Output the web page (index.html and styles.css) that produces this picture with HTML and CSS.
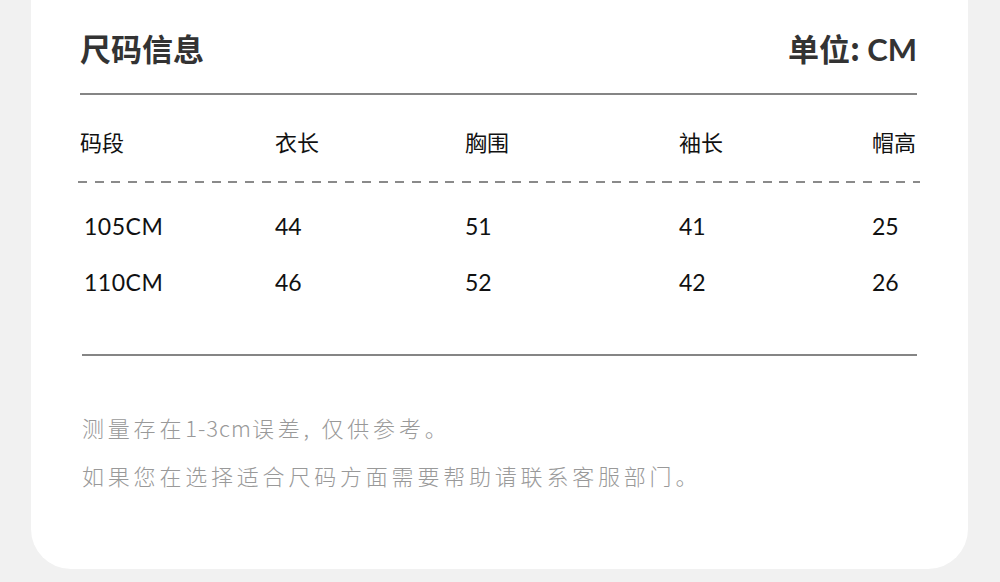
FILE: index.html
```html
<!DOCTYPE html>
<html lang="zh-CN">
<head>
<meta charset="utf-8">
<title>尺码信息</title>
<link rel="stylesheet" href="styles.css">
</head>
<body>
<div class="card">
  <div class="head">
    <h1 class="title">尺码信息</h1>
    <div class="unit">单位: <span class="unit-cm">CM</span></div>
  </div>
  <div class="rule"></div>
  <div class="grid thead">
    <div>码段</div><div>衣长</div><div>胸围</div><div>袖长</div><div>帽高</div>
  </div>
  <div class="dash"></div>
  <div class="grid row">
    <div class="size">105CM</div><div>44</div><div>51</div><div>41</div><div>25</div>
  </div>
  <div class="grid row">
    <div class="size">110CM</div><div>46</div><div>52</div><div>42</div><div>26</div>
  </div>
  <div class="rule rule-bottom"></div>
  <div class="notes">
    <p>测量存在<span class="latin">1-3cm</span>误差, 仅供参考。</p>
    <p>如果您在选择适合尺码方面需要帮助请联系客服部门。</p>
  </div>
</div>
</body>
</html>
```

FILE: styles.css
```css
* { box-sizing: border-box; }
html, body { margin: 0; padding: 0; }
body {
  width: 1000px;
  height: 582px;
  background: #f1f1f1;
  overflow: hidden;
  font-family: "Lato", "Noto Sans CJK SC", sans-serif;
  color: #111;
}
.card {
  margin-left: 31px;
  width: 937px;
  height: 569px;
  background: #fff;
  border-radius: 0 0 40px 40px;
  padding: 27px 51px 0 49px;
}
.head {
  display: flex;
  justify-content: space-between;
  align-items: center;
  height: 42px;
}
.title {
  margin: 0;
  font-family: "Noto Sans CJK SC", sans-serif;
  font-size: 31px;
  font-weight: 700;
  color: #333;
  line-height: 42px;
}
.unit {
  font-family: "Noto Sans CJK SC", sans-serif;
  font-size: 31px;
  font-weight: 700;
  color: #333;
  line-height: 42px;
}
.unit-cm {
  font-family: "Lato", sans-serif;
  font-weight: 700;
}
.rule {
  margin-top: 24px;
  height: 2px;
  background: #858585;
}
.rule-bottom {
  margin-top: 57px;
  margin-left: 2px;
}
.grid {
  display: grid;
  grid-template-columns: 195px 190px 214px 193px 1fr;
  font-size: 22px;
}
.thead {
  margin-top: 31px;
  height: 30px;
  line-height: 30px;
  font-family: "Noto Sans CJK SC", sans-serif;
  color: #111;
}
.dash {
  margin-top: 25px;
  margin-left: -2px;
  width: 842px;
  height: 2px;
  background: repeating-linear-gradient(90deg, #8a8a8a 0 9px, transparent 9px 16.7px);
}
.row {
  height: 30px;
  line-height: 30px;
  color: #111;
  font-size: 23px;
}
.dash + .row { margin-top: 28px; }
.row + .row { margin-top: 26px; }
.size { padding-left: 4px; letter-spacing: 0.5px; }
.notes {
  margin-top: 56px;
  padding-left: 2px;
  font-family: "Noto Sans CJK SC", sans-serif;
  font-size: 22px;
  font-weight: 300;
  color: #999;
  letter-spacing: 3.8px;
}
.notes .latin { letter-spacing: 1px; }
.notes p {
  margin: 0;
  line-height: 30px;
}
.notes p + p { margin-top: 18px; }
```
